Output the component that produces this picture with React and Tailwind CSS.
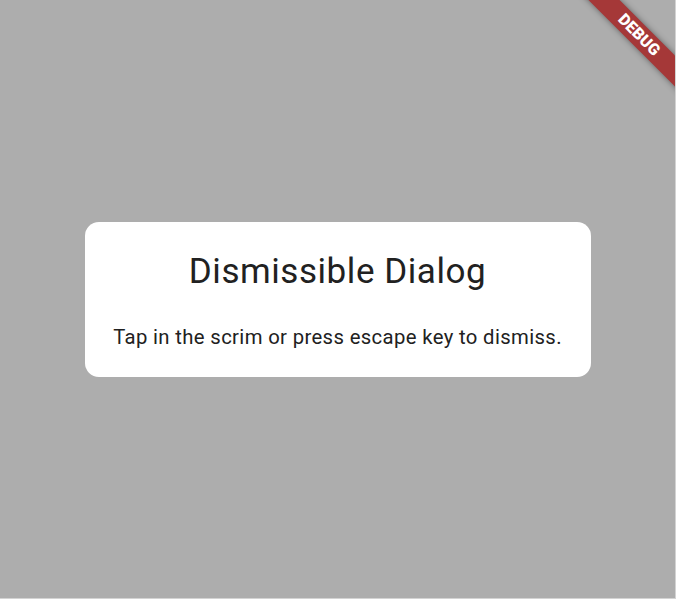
export default function App() {
  return (
    <div className="w-[676px] h-[599px] bg-[#d3d3d3] overflow-hidden" style={{ fontFamily: "Roboto, 'Noto Sans', sans-serif" }}>
      <div className="relative w-[675px] h-[598px] bg-[#adadad] overflow-hidden flex items-center justify-center">
        <div className="bg-white rounded-[14px] w-[506px] pt-[30px] pb-[26px] flex flex-col items-center text-[#212121]">
          <div className="text-[35px] leading-[40px] tracking-[0.55px] whitespace-nowrap">Dismissible Dialog</div>
          <div className="mt-[31px] text-[20.3px] leading-[28px] tracking-[0.36px] whitespace-nowrap">Tap in the scrim or press escape key to dismiss.</div>
        </div>
        <div className="absolute left-[539px] top-[24px] w-[200px] h-[22px] bg-[#a53838] rotate-45 flex items-center justify-center shadow-[0_0_6px_rgba(0,0,0,0.45)]">
          <span className="text-white text-[16px] font-black leading-none tracking-[0.1px]">DEBUG</span>
        </div>
      </div>
    </div>
  );
}
